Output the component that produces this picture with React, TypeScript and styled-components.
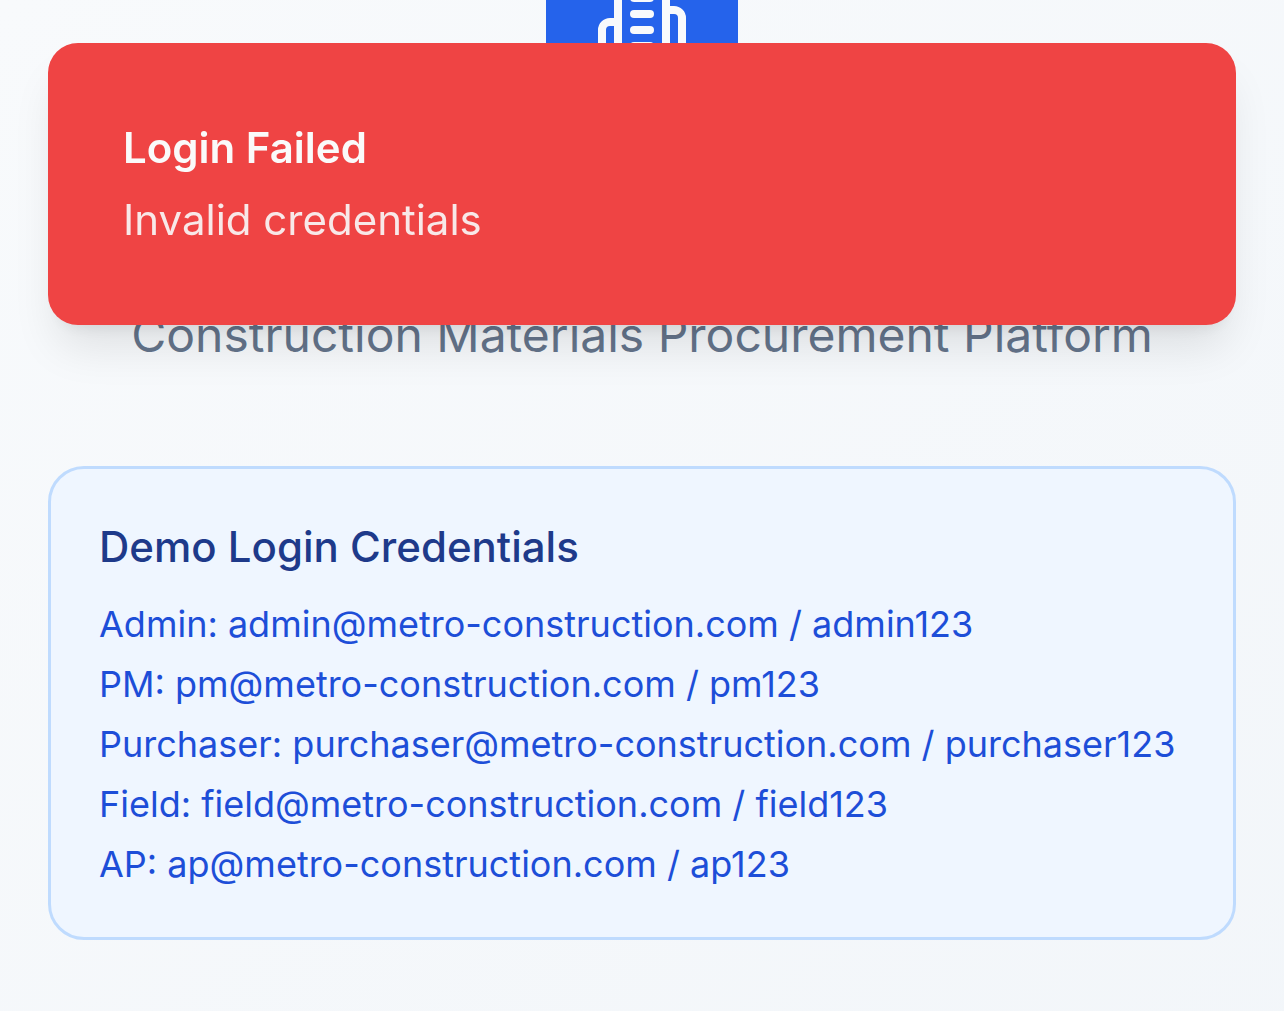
import React from "react";
import styled, { createGlobalStyle } from "styled-components";

const GlobalStyle = createGlobalStyle`
  * { box-sizing: border-box; }
  body {
    margin: 0;
    font-family: Inter, "Liberation Sans", sans-serif;
    -webkit-font-smoothing: antialiased;
  }
  h2, h3, p, ul { margin: 0; padding: 0; }
`;

const Page = styled.main`
  display: flex;
  flex-direction: column;
  min-height: 100vh;
  padding: 0 48px 71px;
  overflow: hidden;
  background: linear-gradient(to bottom right, #f8fafc, #f1f5f9 130%);
`;

const Header = styled.header`
  display: flex;
  flex-direction: column;
  align-items: center;
  margin-top: -74px;
`;

const Logo = styled.div`
  display: flex;
  align-items: center;
  justify-content: center;
  width: 192px;
  height: 192px;
  border-radius: 36px;
  background: #2563eb;
  color: #f8fafc;
`;

const Tagline = styled.p`
  margin-top: 180px;
  font-size: 48px;
  line-height: 74px;
  color: #64748b;
  text-align: center;
`;

const Panel = styled.section`
  margin-top: 94px;
  padding: 48px;
  border: 3px solid #bfdbfe;
  border-radius: 36px;
  background: #eff6ff;
`;

const PanelTitle = styled.h3`
  margin-bottom: 22px;
  font-size: 42px;
  line-height: 60px;
  font-weight: 500;
  color: #1e3a8a;
`;

const Accounts = styled.ul`
  list-style: none;
  font-size: 36px;
  line-height: 50px;
  color: #1d4ed8;
  display: flex;
  flex-direction: column;
  gap: 10px;
`;

const Toast = styled.div`
  position: fixed;
  top: 43px;
  left: 48px;
  right: 48px;
  padding: 75px;
  border-radius: 30px;
  background: #ef4444;
  color: #fafafa;
  box-shadow: 0 30px 45px -9px rgb(0 0 0 / 0.1), 0 12px 18px -12px rgb(0 0 0 / 0.1);
`;

const ToastTitle = styled.h2`
  font-size: 42px;
  line-height: 60px;
  font-weight: 600;
`;

const ToastText = styled.p`
  margin-top: 12px;
  font-size: 42px;
  line-height: 60px;
  opacity: 0.9;
`;

const accounts = [
  { role: "Admin", email: "admin@metro-construction.com", password: "admin123" },
  { role: "PM", email: "pm@metro-construction.com", password: "pm123" },
  { role: "Purchaser", email: "purchaser@metro-construction.com", password: "purchaser123" },
  { role: "Field", email: "field@metro-construction.com", password: "field123" },
  { role: "AP", email: "ap@metro-construction.com", password: "ap123" },
];

function BuildingIcon() {
  return (
    <svg
      width="96"
      height="96"
      viewBox="0 0 24 24"
      fill="none"
      stroke="currentColor"
      strokeWidth="2"
      strokeLinecap="round"
      strokeLinejoin="round"
      aria-hidden="true"
    >
      <path d="M6 22V4a2 2 0 0 1 2-2h8a2 2 0 0 1 2 2v18Z" />
      <path d="M6 12H4a2 2 0 0 0-2 2v6a2 2 0 0 0 2 2h2" />
      <path d="M18 9h2a2 2 0 0 1 2 2v9a2 2 0 0 1-2 2h-2" />
      <path d="M10 6h4" />
      <path d="M10 10h4" />
      <path d="M10 14h4" />
      <path d="M10 18h4" />
    </svg>
  );
}

export default function App() {
  return (
    <>
      <GlobalStyle />
      <Page>
        <Header>
          <Logo>
            <BuildingIcon />
          </Logo>
          <Tagline>Construction Materials Procurement Platform</Tagline>
        </Header>
        <Panel>
          <PanelTitle>Demo Login Credentials</PanelTitle>
          <Accounts>
            {accounts.map(({ role, email, password }) => (
              <li key={role}>{`${role}: ${email} / ${password}`}</li>
            ))}
          </Accounts>
        </Panel>
      </Page>
      <Toast role="alert">
        <ToastTitle>Login Failed</ToastTitle>
        <ToastText>Invalid credentials</ToastText>
      </Toast>
    </>
  );
}
